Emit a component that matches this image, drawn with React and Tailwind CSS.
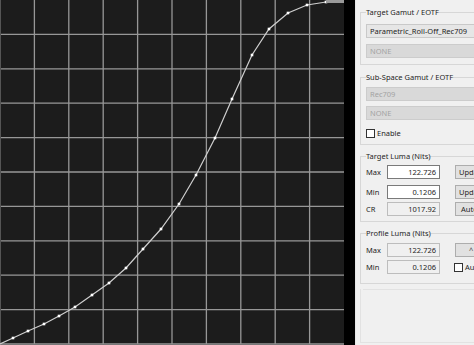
const points = [
  [0, 344], [13, 338], [28, 331], [44, 324], [59, 316], [75, 307], [92, 295],
  [109, 283], [126, 268], [143, 249], [161, 229], [179, 204], [196, 175],
  [215, 138], [232, 99], [252, 55], [269, 29], [288, 13], [307, 5], [326, 2], [344, 1],
];

const gridLines = [1, 2, 3, 4, 5, 6, 7, 8, 9].map((i) => i * 34.4);

function CurveChart() {
  return (
    <div className="h-[345px] w-[344px] shrink-0 bg-[#1c1c1c]">
      <svg width="344" height="345" viewBox="0 0 344 345">
        {gridLines.map((p) => (
          <g key={p}>
            <line x1={p} y1="0" x2={p} y2="344" stroke="#979797" strokeWidth="1.3" />
            <line x1="0" y1={p} x2="344" y2={p} stroke="#979797" strokeWidth="1.3" />
          </g>
        ))}
        <line x1="0" y1="344" x2="344" y2="344" stroke="#979797" strokeWidth="1.4" />
        <line x1="0.5" y1="0" x2="0.5" y2="344" stroke="#555" strokeWidth="1" />
        <polyline
          points={points.map((p) => p.join(",")).join(" ")}
          fill="none"
          stroke="#cfcfcf"
          strokeWidth="1.2"
        />
        {points.slice(1, -1).map(([x, y]) => (
          <rect key={x} x={x - 1.3} y={y - 1.3} width="2.6" height="2.6" fill="#ffffff" />
        ))}
        <rect x="326" y="0" width="18" height="3" fill="#9a9a9a" />
      </svg>
    </div>
  );
}

function Group({ label, children, className = "" }) {
  return (
    <fieldset className={`w-[150px] border border-[#d7d7d7] px-[5px] ${className}`}>
      <legend className="h-[10px] px-0 text-[7.5px] leading-[10px] text-[#1e1e1e]">{label}</legend>
      {children}
    </fieldset>
  );
}

function ComboBox({ text, disabled }) {
  return (
    <div
      className={`h-[14px] w-[140px] border px-[3px] text-[7.5px] leading-[12px] ${
        disabled
          ? "border-[#cccccc] bg-[#d9d9d9] text-[#a3a3a3]"
          : "border-[#c9c9c9] bg-[#e6e6e6] text-[#1e1e1e]"
      }`}
    >
      {text}
    </div>
  );
}

function Checkbox({ label }) {
  return (
    <div className="flex items-center gap-[2px] text-[7.5px] leading-[10px] text-[#1e1e1e]">
      <span className="h-[9px] w-[9px] border border-[#333] bg-white" />
      <span>{label}</span>
    </div>
  );
}

function NumRow({ label, value, editable, button, check, className = "" }) {
  return (
    <div className={`flex items-center text-[7.5px] leading-[12px] text-[#1e1e1e] ${className}`}>
      <span className="w-[21px]">{label}</span>
      <div
        className={`h-[14px] w-[53px] border pr-[3px] text-right ${
          editable ? "border-[#7a7a7a] bg-white" : "border-[#bdbdbd] bg-[#f0f0f0]"
        }`}
      >
        {value}
      </div>
      {button && (
        <div className="ml-[15px] h-[14px] w-[40px] shrink-0 border border-[#adadad] bg-[#e1e1e1] pl-[3px]">
          {button}
        </div>
      )}
      {check && (
        <div className="ml-[14px] flex shrink-0 items-center gap-[2px]">
          <span className="h-[9px] w-[9px] border border-[#333] bg-white" />
          <span>{check}</span>
        </div>
      )}
    </div>
  );
}

export default function App() {
  return (
    <div
      className="flex h-[345px] w-[474px] overflow-hidden bg-[#f0f0f0]"
      style={{ fontFamily: '"Noto Sans", "Open Sans", sans-serif' }}
    >
      <CurveChart />
      <div className="h-[345px] w-[11px] shrink-0 bg-black" />
      <div className="min-w-0 flex-1 overflow-hidden border-l border-[#e6e6e6] bg-[#f0f0f0] pl-[4px] pt-[7px]">
        <Group label="Target Gamut / EOTF" className="pb-[6px]">
          <div className="mt-[7px] flex flex-col gap-[6px]">
            <ComboBox text="Parametric_Roll-Off_Rec709" />
            <ComboBox text="NONE" disabled />
          </div>
        </Group>

        <Group label="Sub-Space  Gamut / EOTF" className="mt-[7px] pb-[6px]">
          <div className="mt-[5px] flex flex-col gap-[5px]">
            <ComboBox text="Rec709" disabled />
            <ComboBox text="NONE" disabled />
          </div>
          <div className="mt-[8px]">
            <Checkbox label="Enable" />
          </div>
        </Group>

        <Group label="Target Luma (Nits)" className="mt-[6px] pb-[5px]">
          <NumRow className="mt-[4px]" label="Max" value="122.726" editable button="Update" />
          <NumRow className="mt-[6px]" label="Min" value="0.1206" editable button="Update" />
          <NumRow className="mt-[3px]" label="CR" value="1017.92" button={<span className="pl-[2px]">Auto</span>} />
        </Group>

        <Group label="Profile Luma (Nits)" className="mt-[6px] pb-[9px]">
          <NumRow
            className="mt-[5px]"
            label="Max"
            value="122.726"
            button={<span className="pl-[10px] text-[#444]">^</span>}
          />
          <NumRow className="mt-[3px]" label="Min" value="0.1206" check="Auto" />
        </Group>

        <fieldset className="mt-[1px] h-[58px] w-[150px] border border-[#e2e2e2]">
          <legend className="h-[8px] px-0 text-[6px] leading-[8px] text-[#d0d0d0]">&nbsp;</legend>
        </fieldset>
      </div>
    </div>
  );
}
